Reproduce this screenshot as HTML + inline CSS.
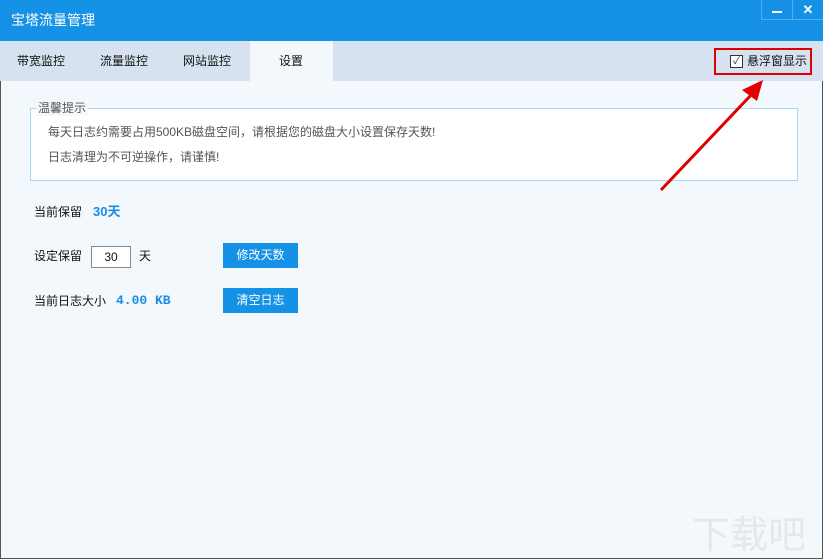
<!DOCTYPE html>
<html><head><meta charset="utf-8"><style>
body{margin:0;width:823px;height:560px;overflow:hidden;font-family:"Liberation Sans","Noto Sans CJK SC",sans-serif;font-size:12px;color:#111;background:#f3f8fc;position:relative}
div{line-height:16px}
.win{position:absolute;left:0;top:0;width:821px;height:558px;border-left:1px solid #555;border-right:1px solid #555;border-bottom:1px solid #555;background:#f3f8fc}
.title{position:absolute;left:0;top:0;width:823px;height:41px;background:#1592e6;color:#fff;font-size:14px}
.title span{position:absolute;left:11px;top:11px;line-height:18px}
.wb{position:absolute;top:0;width:30px;height:19px;border-left:1px solid #4fb0ee;border-bottom:1px solid #4fb0ee;border-right:1px solid #0d75bd}
.tabs{position:absolute;left:0;top:41px;width:823px;height:40px;background:#d6e2f0}
.tab{position:absolute;top:12px;font-size:12px}
.act{position:absolute;left:250px;top:0;width:83px;height:40px;background:#f3f8fc}
.box{position:absolute;left:30px;top:108px;width:766px;height:71px;border:1px solid #a8d8f5;background:#fff}
.legend{position:absolute;left:36px;top:100px;background:#f3f8fc;color:#555;padding:0 2px;font-size:12px}
.g{position:absolute;color:#555;font-size:12px}
.lbl{position:absolute;font-size:12px}
.btn{position:absolute;left:223px;width:75px;height:25px;background:#1592e6;color:#fff;text-align:center;line-height:25px;font-size:12px}
.blue{color:#1a8de3;font-weight:bold}
</style></head><body>
<div class="win"></div>
<div class="title"><span>宝塔流量管理</span>
<div class="wb" style="left:761px"><div style="position:absolute;left:10px;top:11px;width:10px;height:2px;background:#fff"></div></div>
<div class="wb" style="left:792px;color:#fff;font-weight:bold;font-size:13px;text-align:center;line-height:20px">✕</div>
</div>
<div class="tabs">
<div class="act"></div>
<div class="tab" style="left:17px">带宽监控</div>
<div class="tab" style="left:100px">流量监控</div>
<div class="tab" style="left:183px">网站监控</div>
<div class="tab" style="left:279px">设置</div>
<div style="position:absolute;left:714px;top:7px;width:94px;height:23px;border:2px solid #e00000"></div>
<div style="position:absolute;left:730px;top:14px;width:11px;height:11px;border:1px solid #333;background:#fff;font-size:10px;line-height:11px;text-align:center;color:#333">✓</div>
<div class="tab" style="left:747px">悬浮窗显示</div>
</div>
<div class="box"></div>
<div class="legend">温馨提示</div>
<div class="g" style="left:48px;top:124px">每天日志约需要占用500KB磁盘空间，请根据您的磁盘大小设置保存天数!</div>
<div class="g" style="left:48px;top:149px">日志清理为不可逆操作，请谨慎!</div>
<div class="lbl" style="left:34px;top:204px">当前保留</div>
<div class="lbl blue" style="left:93px;top:204px;font-size:13px">30天</div>
<div class="lbl" style="left:34px;top:248px">设定保留</div>
<div style="position:absolute;left:91px;top:246px;width:38px;height:20px;border:1px solid #888;background:#fff;text-align:center;line-height:20px;font-size:12px">30</div>
<div class="lbl" style="left:139px;top:248px">天</div>
<div class="btn" style="top:243px">修改天数</div>
<div class="lbl" style="left:34px;top:293px">当前日志大小</div>
<div class="lbl blue" style="left:116px;top:293px;font-family:'Liberation Mono',monospace;font-size:13px">4.00 KB</div>
<div class="btn" style="top:288px">清空日志</div>
<svg style="position:absolute;left:0;top:0" width="823" height="560">
<line x1="661" y1="190" x2="752" y2="94" stroke="#e00000" stroke-width="3"/>
<polygon points="763,80 742,90 757,101" fill="#e00000"/>
<text x="692" y="548" font-size="38" fill="#e4e8ec" font-family="Noto Sans CJK SC">下载吧</text>
</svg>
</body></html>
